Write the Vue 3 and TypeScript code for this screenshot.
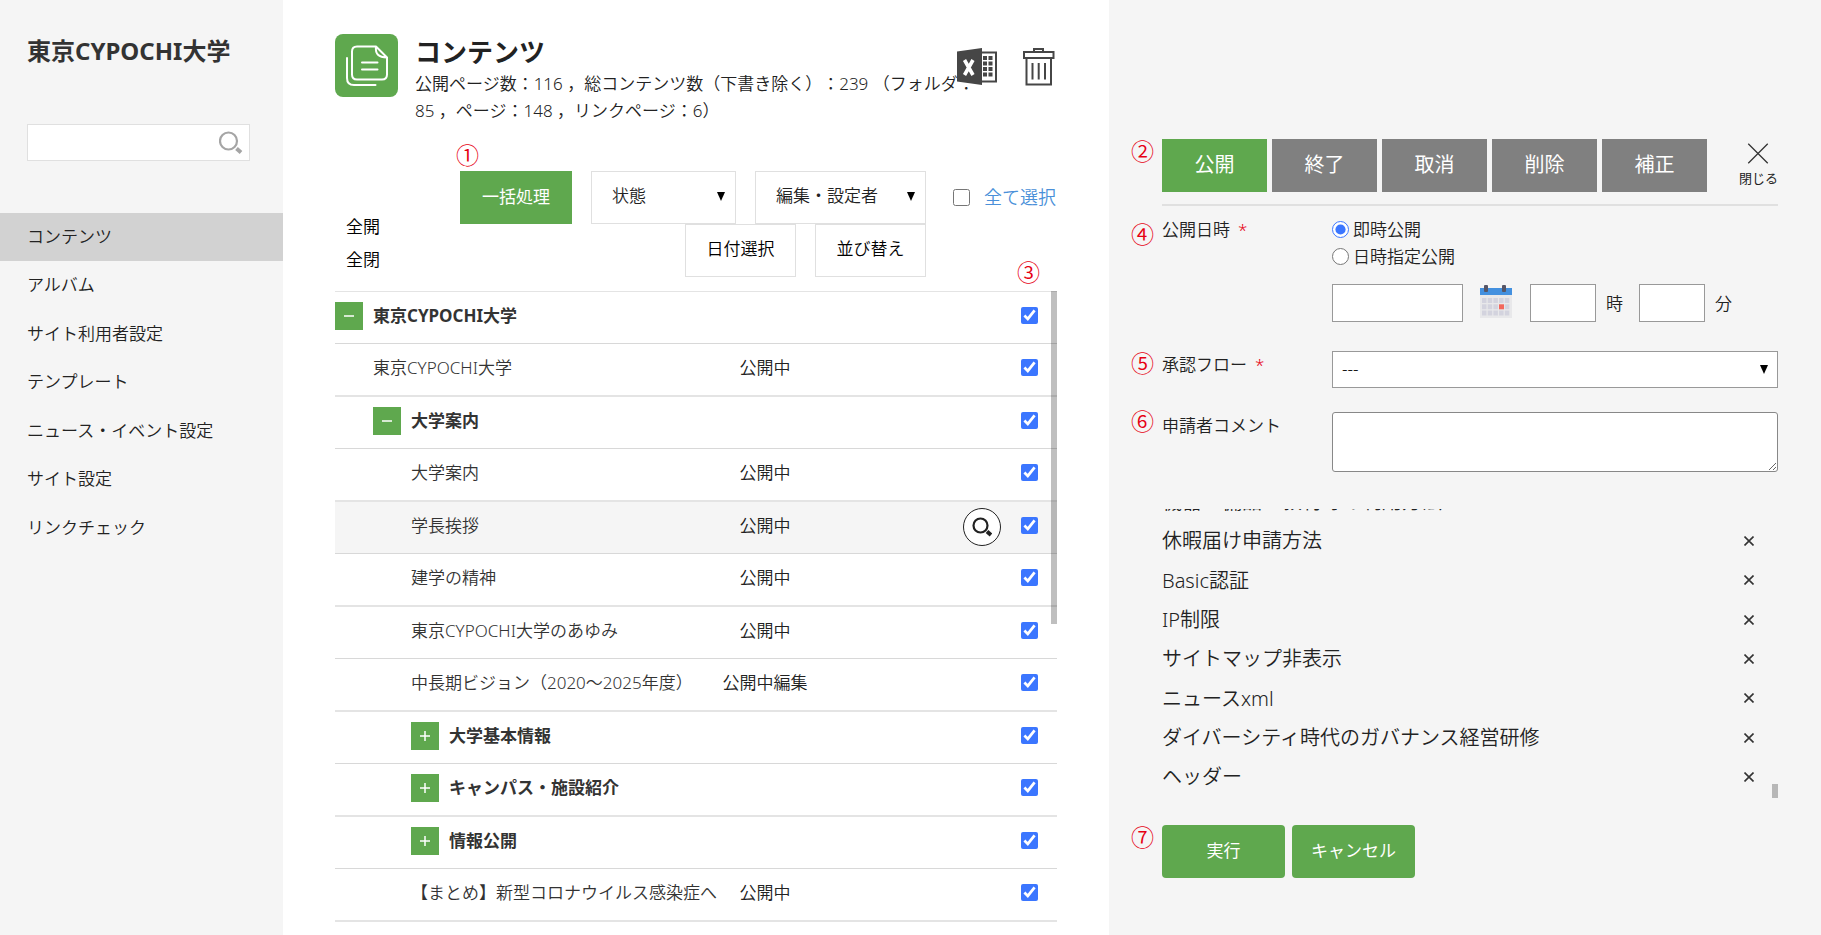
<script setup lang="ts">
import { ref } from 'vue'

interface Row {
  name: string
  level: number
  folder?: 'open' | 'closed'
  status?: string
  hover?: boolean
}

const menu: string[] = [
  'コンテンツ',
  'アルバム',
  'サイト利用者設定',
  'テンプレート',
  'ニュース・イベント設定',
  'サイト設定',
  'リンクチェック',
]

const rows: Row[] = [
  { name: '東京CYPOCHI大学', level: 0, folder: 'open' },
  { name: '東京CYPOCHI大学', level: 1, status: '公開中' },
  { name: '大学案内', level: 1, folder: 'open' },
  { name: '大学案内', level: 2, status: '公開中' },
  { name: '学長挨拶', level: 2, status: '公開中', hover: true },
  { name: '建学の精神', level: 2, status: '公開中' },
  { name: '東京CYPOCHI大学のあゆみ', level: 2, status: '公開中' },
  { name: '中長期ビジョン（2020～2025年度）', level: 2, status: '公開中編集' },
  { name: '大学基本情報', level: 2, folder: 'closed' },
  { name: 'キャンパス・施設紹介', level: 2, folder: 'closed' },
  { name: '情報公開', level: 2, folder: 'closed' },
  { name: '【まとめ】新型コロナウイルス感染症へ', level: 2, status: '公開中' },
]
const checked = ref<boolean[]>(rows.map(() => true))

const tabs: string[] = ['公開', '終了', '取消', '削除', '補正']
const activeTab = ref('公開')
const timing = ref('now')

const targets: string[] = [
  '機器・備品・教材等の利用方法',
  '休暇届け申請方法',
  'Basic認証',
  'IP制限',
  'サイトマップ非表示',
  'ニュースxml',
  'ダイバーシティ時代のガバナンス経営研修',
  'ヘッダー',
]
</script>

<template>
  <div class="app">
    <aside class="side">
      <h1 class="brand">東京CYPOCHI大学</h1>
      <form class="search" @submit.prevent>
        <input type="text" aria-label="検索" />
        <button type="submit" aria-label="検索">
          <svg width="24" height="24" viewBox="0 0 24 24">
            <circle cx="9.500" cy="10" r="8.500" fill="none" stroke="#a5a5a5" stroke-width="2.200" />
            <path d="M17.500 17.500L22 21.500" stroke="#a5a5a5" stroke-width="4" />
          </svg>
        </button>
      </form>
      <nav class="menu">
        <a v-for="(m, i) in menu" :key="m" href="#" :class="{ current: i === 0 }">{{ m }}</a>
      </nav>
    </aside>

    <main class="main">
      <header class="head">
        <span class="head-icon">
          <svg width="63" height="63" viewBox="0 0 63 63" fill="none" stroke="#fff" stroke-width="2">
            <path d="M41 12.500H22Q17 12.500 17 17.500V40.500Q17 45.500 22 45.500H47Q52 45.500 52 40.500V23.500ZM41 12.500Q39.500 23.500 52 23.500" stroke-linejoin="round" />
            <path d="M12 24V44Q12 51 19 51H40.500" stroke-linecap="round" />
            <path d="M27 28.500H42.500M27 35.500H42.500" stroke-linecap="round" />
          </svg>
        </span>
        <div class="head-text">
          <h2>コンテンツ</h2>
          <p>公開ページ数：116 ，総コンテンツ数（下書き除く）：239 （フォルダ：85 ，ページ：148 ，リンクページ：6）</p>
        </div>
        <div class="tools">
          <button type="button" aria-label="Excel">
            <svg width="42" height="38" viewBox="0 0 42 38">
              <rect x="22" y="4.500" width="18" height="29" fill="#fff" stroke="#464646" stroke-width="2" />
              <path d="M1 3.500L26 0V37L1 33.500Z" fill="#464646" />
              <path d="M8.500 12L17 27M17 12L8.500 27" stroke="#fff" stroke-width="3.600" />
              <g fill="#464646">
                <path d="M27 8h4v4h-4zM32.500 8h4v4h-4zM27 13.500h4v4h-4zM32.500 13.500h4v4h-4zM27 19h4v4h-4zM32.500 19h4v4h-4zM27 24.500h4v4h-4zM32.500 24.500h4v4h-4z" />
              </g>
            </svg>
          </button>
          <button type="button" aria-label="ごみ箱">
            <svg width="32" height="38" viewBox="0 0 32 38" fill="none" stroke="#464646" stroke-width="2">
              <path d="M11 3.500V1H20V3.500" />
              <rect x="1" y="4" width="29.500" height="6" />
              <path d="M3.500 10V36.500H28V10" />
              <path d="M9.500 15V31.500M15.700 15V31.500M22 15V31.500" />
            </svg>
          </button>
        </div>
      </header>

      <div class="toolbar">
        <div class="tree-links">
          <button type="button">全開</button>
          <button type="button">全閉</button>
        </div>
        <div class="filters">
          <div class="filter-row">
            <span class="anchor">
              <span class="mark mark-above">①</span>
              <button type="button" class="batch">一括処理</button>
            </span>
            <span class="drop drop-a">
              <select aria-label="状態"><option>状態</option></select>
              <svg width="8" height="9" viewBox="0 0 8 9"><path d="M0 0H8L4 9Z" /></svg>
            </span>
            <span class="drop drop-b">
              <select aria-label="編集・設定者"><option>編集・設定者</option></select>
              <svg width="8" height="9" viewBox="0 0 8 9"><path d="M0 0H8L4 9Z" /></svg>
            </span>
          </div>
          <div class="filter-row">
            <button type="button" class="plain">日付選択</button>
            <button type="button" class="plain">並び替え</button>
          </div>
        </div>
        <label class="all"><input type="checkbox" />全て選択</label>
      </div>

      <div class="list">
        <span class="mark mark-list">③</span>
        <table>
          <colgroup>
            <col />
            <col class="c-status" />
            <col class="c-view" />
            <col class="c-check" />
          </colgroup>
          <tbody>
            <tr v-for="(r, i) in rows" :key="i" :class="{ hover: r.hover }">
              <td>
                <div :class="['name', 'level-' + r.level, { folder: r.folder }]">
                  <button v-if="r.folder" type="button" class="toggle" :aria-label="r.folder === 'open' ? '閉じる' : '開く'">
                    <svg width="10" height="10" viewBox="0 0 10 10" stroke="#fff" stroke-width="1.500">
                      <path :d="r.folder === 'open' ? 'M0 5H10' : 'M0 5H10M5 0V10'" />
                    </svg>
                  </button>
                  <span :id="'name-' + i">{{ r.name }}</span>
                </div>
              </td>
              <td class="status">{{ r.status }}</td>
              <td class="view">
                <button v-if="r.hover" type="button" class="preview" aria-label="プレビュー">
                  <svg width="20" height="20" viewBox="0 0 20 20">
                    <circle cx="8.500" cy="8.500" r="7" fill="none" stroke="#222" stroke-width="2.200" />
                    <path d="M15 14.500L19 18" stroke="#222" stroke-width="4" />
                  </svg>
                </button>
              </td>
              <td class="check"><input v-model="checked[i]" type="checkbox" :aria-labelledby="'name-' + i" /></td>
            </tr>
          </tbody>
        </table>
        <span class="thumb"></span>
      </div>
    </main>

    <section class="panel">
      <div class="tabs">
        <span class="mark mark-tabs">②</span>
        <button
          v-for="t in tabs"
          :key="t"
          type="button"
          :class="{ active: t === activeTab }"
          @click="activeTab = t"
        >{{ t }}</button>
        <button type="button" class="close">
          <svg width="28" height="28" viewBox="0 0 28 28" stroke="#333" stroke-width="1.700"><path d="M1 1L27 27M27 1L1 27" /></svg>
          閉じる
        </button>
      </div>

      <div class="field when">
        <span class="mark mark-when">④</span>
        <span class="label">公開日時<em>*</em></span>
        <div class="control">
          <label class="radio"><input v-model="timing" type="radio" name="timing" value="now" />即時公開</label>
          <label class="radio"><input v-model="timing" type="radio" name="timing" value="later" />日時指定公開</label>
          <div class="datetime">
            <input type="text" class="date" aria-label="公開日" />
            <button type="button" class="cal" aria-label="カレンダー">
              <svg width="32" height="33" viewBox="0 0 32 33">
                <rect x="0" y="9" width="32" height="24" fill="#e8e8ea" />
                <rect x="0" y="3" width="32" height="7" fill="#4390df" />
                <rect x="4" y="0" width="4" height="7" rx="1" fill="#556" />
                <rect x="22" y="0" width="4" height="7" rx="1" fill="#556" />
                <path d="M2 13h4.500v5h-4.500zM7.700 13h4.500v5h-4.500zM13.400 13h4.500v5h-4.500zM19.100 13h4.500v5h-4.500zM24.800 13h4.500v5h-4.500zM2 19.300h4.500v5h-4.500zM7.700 19.300h4.500v5h-4.500zM13.400 19.300h4.500v5h-4.500zM24.800 19.300h4.500v5h-4.500zM2 25.600h4.500v5h-4.500zM7.700 25.600h4.500v5h-4.500zM13.400 25.600h4.500v5h-4.500zM19.100 25.600h4.500v5h-4.500zM24.800 25.600h4.500v5h-4.500z" fill="#d3d3de" />
                <rect x="19" y="19.300" width="5" height="5" fill="#f2675c" />
              </svg>
            </button>
            <label><input type="text" class="num" />時</label>
            <label><input type="text" class="num" />分</label>
          </div>
        </div>
      </div>

      <div class="field flow">
        <span class="mark mark-flow">⑤</span>
        <label class="label" for="flow">承認フロー<em>*</em></label>
        <span class="drop control">
          <select id="flow"><option>---</option></select>
          <svg width="8" height="9" viewBox="0 0 8 9"><path d="M0 0H8L4 9Z" /></svg>
        </span>
      </div>

      <div class="field">
        <span class="mark mark-comment">⑥</span>
        <label class="label" for="comment">申請者コメント</label>
        <textarea id="comment" class="control"></textarea>
      </div>

      <div class="targets">
        <ul>
          <li v-for="t in targets" :key="t">
            <span>{{ t }}</span>
            <button type="button" :aria-label="t + 'を外す'">
              <svg width="10" height="10" viewBox="0 0 10 10" stroke="#333" stroke-width="1.600"><path d="M0.500 0.500L9.500 9.500M9.500 0.500L0.500 9.500" /></svg>
            </button>
          </li>
        </ul>
        <span class="thumb"></span>
      </div>

      <div class="actions">
        <span class="mark mark-actions">⑦</span>
        <button type="button">実行</button>
        <button type="button">キャンセル</button>
      </div>
    </section>
  </div>
</template>

<style>
html,
body {
  margin: 0;
  height: 100%;
  overflow: hidden;
  background: #fff;
}
</style>

<style scoped>
.app,
.app * {
  box-sizing: border-box;
}
.app {
  display: grid;
  grid-template-columns: 283px 826fr 712fr;
  height: 100vh;
  overflow: hidden;
  color: #222;
  font: 350 17px/27px "Noto Sans", "Noto Sans CJK JP", sans-serif;
  text-spacing-trim: space-all;
}
button,
input,
select,
textarea {
  margin: 0;
  padding: 0;
  border: 0;
  background: none;
  color: inherit;
  font: inherit;
}
svg {
  display: block;
}
.mark {
  position: absolute;
  color: #e60012;
  font-size: 23px;
  line-height: 24px;
}

/* sidebar */
.side {
  background: #f5f5f5;
}
.brand {
  margin: 0;
  padding: 34px 27px 0;
  font-size: 24px;
  line-height: 34px;
  color: #333;
  white-space: nowrap;
}
.search {
  display: flex;
  align-items: center;
  margin: 56px 33px 0 27px;
  height: 37px;
  padding-right: 6px;
  background: #fff;
  border: 1px solid #e0e0e0;
}
.search input {
  flex: 1;
  min-width: 0;
  outline: 0;
}
.menu {
  margin-top: 52px;
}
.menu a {
  display: block;
  height: 48px;
  padding-left: 27px;
  line-height: 47px;
  color: #222;
  text-decoration: none;
}
.menu a:nth-child(2n) {
  height: 49px;
}
.menu .current {
  background: #d2d2d2;
}

/* main column */
.main {
  min-width: 0;
  padding: 34px 52px 0;
  overflow: hidden;
}
.head {
  position: relative;
  display: flex;
  gap: 17px;
  height: 137px;
}
.head-icon {
  flex: none;
  width: 63px;
  height: 63px;
  border-radius: 8px;
  background: #5fa84e;
}
.head-text {
  flex: 1;
  margin-right: 64px;
}
h2 {
  margin: 0;
  font-size: 26px;
  line-height: 36px;
}
p {
  margin: 0;
}
.tools {
  position: absolute;
  top: 14px;
  right: 2px;
  display: flex;
  gap: 25px;
}
.toolbar {
  display: flex;
  height: 120px;
}
.tree-links {
  display: flex;
  flex-direction: column;
  gap: 6px;
  padding: 42px 0 0 11px;
  color: #000;
}
.filters {
  flex: 1;
  margin-right: 27px;
}
.filter-row {
  display: flex;
  justify-content: flex-end;
  gap: 19px;
}
.anchor {
  position: relative;
}
.mark-above {
  top: -28px;
  left: -4px;
}
.batch {
  width: 112px;
  height: 53px;
  padding-bottom: 3px;
  background: #5fa84e;
  color: #fff;
  font-weight: 400;
}
.drop {
  position: relative;
  display: block;
}
.drop select {
  width: 100%;
  height: 53px;
  padding: 0 20px 4px;
  border: 1px solid #e0e0e0;
  background: #fff;
  appearance: none;
}
.drop svg {
  position: absolute;
  top: 21px;
  right: 11px;
  pointer-events: none;
}
.drop-a {
  width: 145px;
}
.drop-b {
  width: 171px;
}
.plain {
  width: 111px;
  height: 53px;
  padding-bottom: 4px;
  border: 1px solid #e0e0e0;
  color: #000;
}
.all {
  display: flex;
  align-items: center;
  height: 53px;
  gap: 14px;
  padding-right: 1px;
  font-size: 18px;
  color: #4a90d9;
}
input[type='checkbox'],
input[type='radio'] {
  width: 17px;
  height: 17px;
  accent-color: #3b76ff;
}
.list {
  position: relative;
}
.mark-list {
  top: -31px;
  right: 17px;
}
table {
  width: 100%;
  table-layout: fixed;
  border-collapse: separate;
  border-spacing: 0;
  border-top: 1px solid #e4e4e4;
}
.c-status {
  width: 96px;
}
.c-view {
  width: 204px;
}
.c-check {
  width: 40px;
}
td {
  height: 52px;
  padding: 0 0 4px;
  border-bottom: 1px solid #d8d8d8;
  color: #333;
  white-space: nowrap;
}
tr:nth-child(even) td {
  height: 53px;
  border-bottom: 2px solid #e4e4e4;
}
.hover td {
  background: #f5f5f5;
}
.name {
  display: flex;
  align-items: center;
  gap: 10px;
  overflow: hidden;
}
.level-1 {
  padding-left: 38px;
}
.level-2 {
  padding-left: 76px;
}
.folder {
  font-weight: 700;
}
.toggle {
  display: flex;
  align-items: center;
  justify-content: center;
  width: 28px;
  height: 28px;
  background: #5fa84e;
}
.status {
  text-align: center;
  color: #222;
}
.view {
  padding: 0 16px 1px 0;
}
.preview {
  display: flex;
  align-items: center;
  justify-content: center;
  width: 38px;
  height: 38px;
  margin-left: auto;
  border: 1px solid #222;
  border-radius: 50%;
  background: #fff;
}
.check input {
  display: block;
  margin-left: 4px;
}
.thumb {
  position: absolute;
  right: 0;
  width: 6px;
  background: rgba(0, 0, 0, 0.25);
}
.list .thumb {
  top: 0;
  height: 333px;
}

/* publishing panel */
.panel {
  min-width: 0;
  padding: 139px 43px 0 53px;
  background: #f5f5f5;
}
.tabs {
  position: relative;
  display: flex;
  gap: 5px;
  height: 67px;
  border-bottom: 2px solid #e0e0e0;
}
.tabs button {
  width: 105px;
  height: 53px;
  padding-bottom: 3px;
  background: #808080;
  color: #fff;
  font-size: 20px;
  font-weight: 400;
}
.tabs .active {
  background: #5fa84e;
}
.tabs .close {
  display: flex;
  flex-direction: column;
  align-items: center;
  width: auto;
  margin-left: auto;
  padding: 4px 0 0;
  background: none;
  color: #222;
  font-size: 13px;
  line-height: 28px;
}
.mark-tabs {
  top: 0;
  left: -31px;
}
.field {
  position: relative;
  display: flex;
}
.label {
  width: 170px;
}
.control {
  flex: 1;
}
em {
  margin-left: 8px;
  color: #e60012;
  font-style: normal;
}
.mark-when {
  top: 16px;
  left: -31px;
}
.mark-flow {
  top: 0;
  left: -31px;
}
.mark-comment {
  top: -3px;
  left: -31px;
}
.mark-actions {
  top: 0;
  left: -31px;
}
.when {
  padding-top: 10px;
}
.radio {
  display: flex;
  align-items: center;
  gap: 4px;
}
.datetime {
  display: flex;
  align-items: center;
  margin-top: 14px;
}
.datetime input {
  height: 38px;
  border: 1px solid #999;
  background: #fff;
}
.datetime label {
  display: flex;
  align-items: center;
  gap: 10px;
  margin-right: 16px;
}
.date {
  width: 131px;
}
.cal {
  margin: 0 18px 4px 17px;
}
.num {
  width: 66px;
}
.flow {
  margin-top: 29px;
}
.flow select {
  height: 37px;
  padding: 0 9px 2px;
  border-color: #999;
  color: #000;
}
.flow svg {
  top: 14px;
  right: 10px;
}
.flow + .field {
  margin-top: 24px;
}
textarea {
  height: 60px;
  border: 1px solid #888;
  border-radius: 3px;
  background: #fff;
}
.targets {
  position: relative;
  height: 289px;
  margin-top: 37px;
}
ul {
  display: flex;
  flex-direction: column;
  justify-content: flex-end;
  height: 100%;
  margin: 0;
  padding: 0 0 2px;
  overflow: hidden;
  list-style: none;
}
li {
  flex: none;
  display: flex;
  align-items: center;
  justify-content: space-between;
  height: 39px;
  padding-right: 24px;
  font-size: 20px;
}
li:nth-child(3n) {
  height: 40px;
}
.targets .thumb {
  bottom: 0;
  height: 14px;
}
.actions {
  position: relative;
  display: flex;
  gap: 7px;
  margin-top: 27px;
}
.actions button {
  width: 123px;
  height: 53px;
  padding-bottom: 3px;
  border-radius: 4px;
  background: #5fa84e;
  color: #fff;
  font-weight: 400;
}
</style>
